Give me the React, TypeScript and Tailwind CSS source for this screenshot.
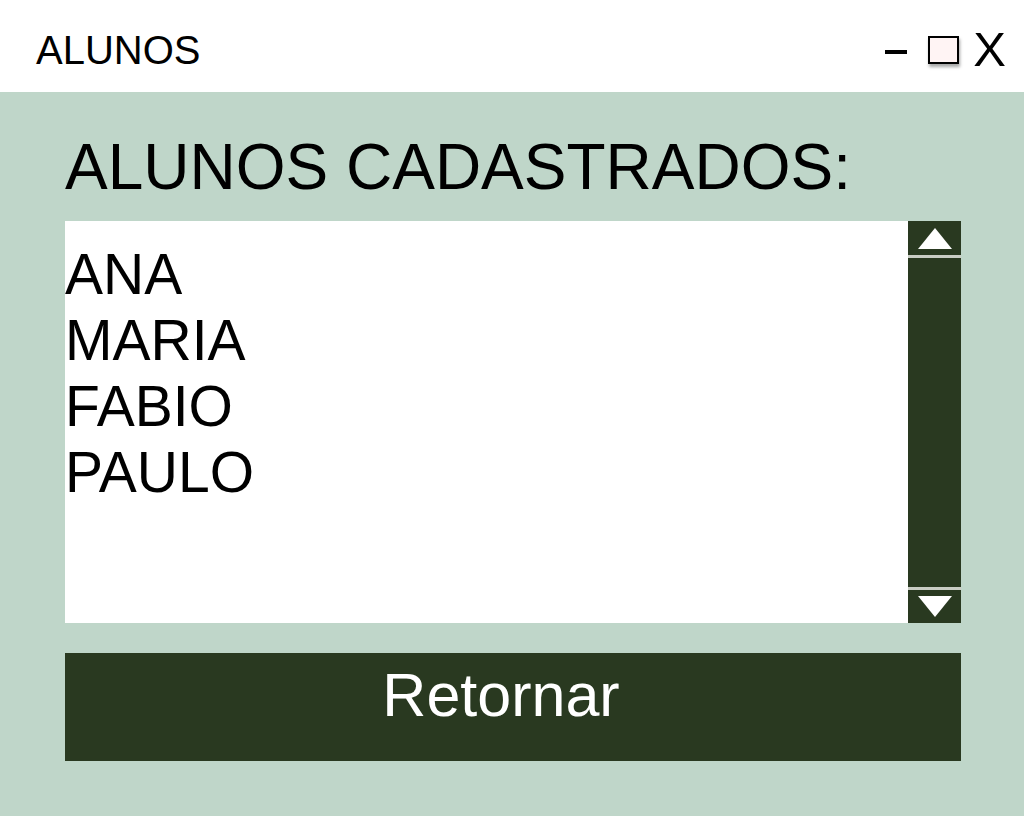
import React from "react";

const alunos = ["ANA", "MARIA", "FABIO", "PAULO"];

export default function App() {
  return (
    <div
      className="w-[1024px] h-[816px] flex flex-col bg-[#bfd6c9] text-black"
      style={{ fontFamily: '"Liberation Sans", Arial, sans-serif' }}
    >
      {/* HEADER */}
      <header className="h-[92px] bg-white flex items-center justify-between pl-[36px] pr-[18px] pt-[7px]">
        <h1 className="text-[40px] leading-none">ALUNOS</h1>

        <div className="flex items-center">
          <div className="w-[22px] h-[4px] bg-black mt-[4px]" />
          <div className="ml-[21px] w-[31px] h-[28px] border-2 border-black bg-[#fff4f4] shadow-[1px_3px_3px_rgba(0,0,0,0.35)]" />
          <span className="ml-[14px] text-[49px] leading-none">X</span>
        </div>
      </header>

      {/* CONTENT */}
      <main className="flex flex-col pl-[65px] pr-[63px] pt-[43px]">
        <h2 className="text-[64px] leading-none">ALUNOS CADASTRADOS:</h2>

        {/* Lista */}
        <div className="mt-[22px] h-[402px] flex bg-white">
          <ul className="flex-1 pt-[20px]">
            {alunos.map((nome) => (
              <li key={nome} className="text-[57px] leading-[66px]">
                {nome}
              </li>
            ))}
          </ul>

          {/* Scrollbar */}
          <div className="w-[53px] flex flex-col bg-[#293920]">
            <button className="h-[34px] flex items-center justify-center">
              <svg width="34" height="21" viewBox="0 0 34 21">
                <polygon points="17,0 34,21 0,21" fill="#ffffff" />
              </svg>
            </button>
            <div className="h-[3px] bg-[#c9cdc4]" />
            <div className="flex-1" />
            <div className="h-[3px] bg-[#c9cdc4]" />
            <button className="h-[33px] flex items-center justify-center">
              <svg width="34" height="21" viewBox="0 0 34 21">
                <polygon points="0,0 34,0 17,21" fill="#ffffff" />
              </svg>
            </button>
          </div>
        </div>

        {/* Retornar */}
        <button className="mt-[30px] h-[108px] bg-[#293920] text-white text-[61px] leading-none flex items-center justify-center pr-[24px] pb-[24px]">
          Retornar
        </button>
      </main>
    </div>
  );
}
